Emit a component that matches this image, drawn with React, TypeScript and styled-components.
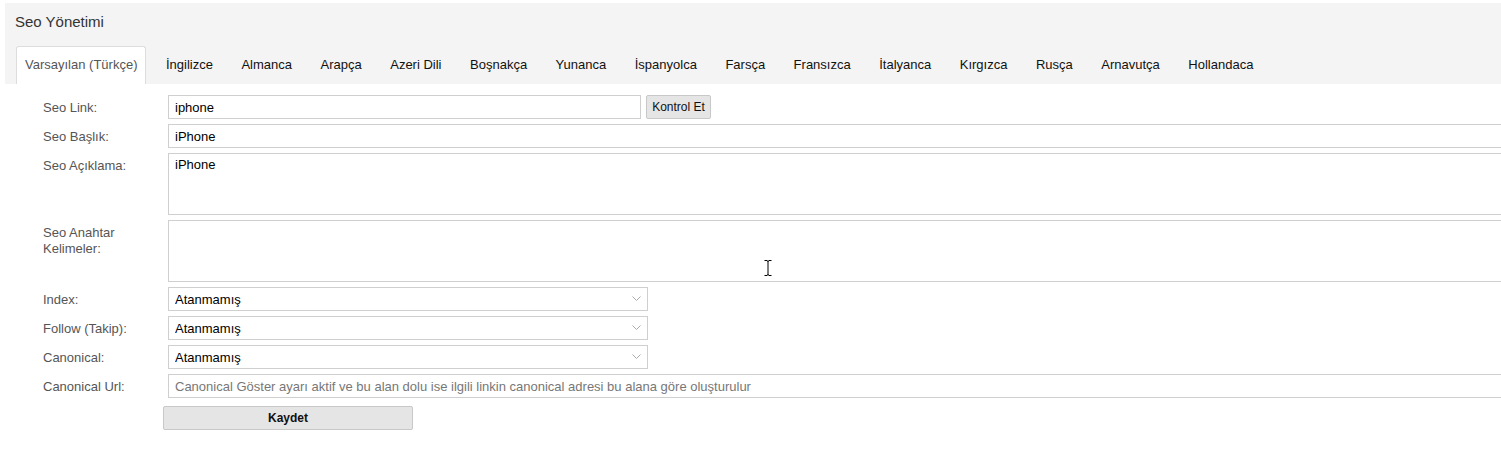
import { FC } from 'react';
import styled, { createGlobalStyle } from 'styled-components';

const GlobalStyle = createGlobalStyle`
    html, body {
        margin: 0;
        padding: 0;
        overflow: hidden;
        background: #ffffff;
    }
    body {
        font-family: "Liberation Sans", Arial, sans-serif;
        font-size: 13px;
        color: #333;
    }
    * {
        box-sizing: border-box;
    }
`;

const Page = styled.div`
    position: relative;
    padding: 3px 0 0 5px;
    width: 1501px;
    height: 470px;
`;

const Header = styled.div`
    background-color: #f4f4f4;
    padding: 9px 0 0 10px;
`;

const Title = styled.h1`
    margin: 0;
    font-size: 15px;
    font-weight: normal;
    line-height: 20px;
    color: #333;
`;

const Tabs = styled.ul`
    list-style: none;
    margin: 14px 0 0 1px;
    padding: 0;
    display: flex;
    gap: 10.5px;
`;

const Tab = styled.li<{ $active?: boolean }>`
    height: 38px;
    line-height: 36px;
    padding: 0 8px;
    font-size: 13px;
    white-space: nowrap;
    color: ${(p) => (p.$active ? '#555' : '#111')};
    background: ${(p) => (p.$active ? '#ffffff' : 'transparent')};
    border: 1px solid ${(p) => (p.$active ? '#dddddd' : 'transparent')};
    border-bottom: none;
    border-radius: 3px 3px 0 0;
`;

const Form = styled.form`
    display: flex;
    flex-direction: column;
    gap: 5px;
    padding-top: 11px;
`;

const Row = styled.div`
    display: grid;
    grid-template-columns: 163px 1fr;
    align-items: start;
`;

const Label = styled.label`
    padding: 5px 15px 0 38px;
    line-height: 16px;
    font-size: 13px;
    color: #555;
`;

const Field = styled.div`
    display: flex;
    align-items: center;
    gap: 5px;
`;

const TextInput = styled.input<{ $width?: number }>`
    width: ${(p) => (p.$width ? `${p.$width}px` : '1400px')};
    height: 24px;
    padding: 0 6px;
    border: 1px solid #cfcfcf;
    font-family: "Liberation Sans", Arial, sans-serif;
    font-size: 13px;
    color: #000;
    outline: none;

    &::placeholder {
        color: #777;
    }
`;

const TextArea = styled.textarea`
    width: 1400px;
    height: 62px;
    padding: 3px 6px;
    border: 1px solid #cfcfcf;
    font-family: "Liberation Sans", Arial, sans-serif;
    font-size: 13px;
    line-height: 16px;
    color: #000;
    resize: none;
    outline: none;
`;

const SelectWrap = styled.div`
    position: relative;
    width: 480px;
    height: 24px;

    svg {
        position: absolute;
        right: 7px;
        top: 9px;
        pointer-events: none;
    }
`;

const Select = styled.select`
    appearance: none;
    width: 100%;
    height: 24px;
    padding: 0 6px;
    border: 1px solid #cfcfcf;
    border-radius: 0;
    background: #fff;
    font-family: "Liberation Sans", Arial, sans-serif;
    font-size: 13px;
    color: #000;
    outline: none;
`;

const Button = styled.button<{ $wide?: boolean }>`
    height: 24px;
    width: ${(p) => (p.$wide ? '250px' : '65px')};
    margin-left: ${(p) => (p.$wide ? '-5px' : '0')};
    padding: 0;
    background: #e5e5e5;
    border: 1px solid #c8c8c8;
    border-radius: 2px;
    font-family: "Liberation Sans", Arial, sans-serif;
    font-size: 12px;
    font-weight: ${(p) => (p.$wide ? 'bold' : 'normal')};
    color: #111;
`;

const SaveRow = styled(Row)`
    margin-top: 3px;
`;

const Cursor = styled.svg`
    position: absolute;
    left: 764px;
    top: 260px;
`;

const tabs = [
    'Varsayılan (Türkçe)',
    'İngilizce',
    'Almanca',
    'Arapça',
    'Azeri Dili',
    'Boşnakça',
    'Yunanca',
    'İspanyolca',
    'Farsça',
    'Fransızca',
    'İtalyanca',
    'Kırgızca',
    'Rusça',
    'Arnavutça',
    'Hollandaca',
];

const Chevron = () => (
    <svg width="9" height="6" viewBox="0 0 9 6">
        <path d="M0.5 0.5 L4.5 4.5 L8.5 0.5" fill="none" stroke="#aaa" strokeWidth="1" />
    </svg>
);

const SelectField: FC<{ label: string }> = ({ label }) => (
    <Row>
        <Label>{label}</Label>
        <SelectWrap>
            <Select defaultValue="0">
                <option value="0">Atanmamış</option>
            </Select>
            <Chevron />
        </SelectWrap>
    </Row>
);

const App: FC = () => {
    return (
        <>
            <GlobalStyle />
            <Page>
                <Header>
                    <Title>Seo Yönetimi</Title>
                    <Tabs>
                        {tabs.map((t, i) => (
                            <Tab key={t} $active={i === 0}>
                                {t}
                            </Tab>
                        ))}
                    </Tabs>
                </Header>
                <Form onSubmit={(e) => e.preventDefault()}>
                    <Row>
                        <Label>Seo Link:</Label>
                        <Field>
                            <TextInput $width={473} defaultValue="iphone" />
                            <Button type="button">Kontrol Et</Button>
                        </Field>
                    </Row>
                    <Row>
                        <Label>Seo Başlık:</Label>
                        <TextInput defaultValue="iPhone" />
                    </Row>
                    <Row>
                        <Label>Seo Açıklama:</Label>
                        <TextArea defaultValue="iPhone" />
                    </Row>
                    <Row>
                        <Label>Seo Anahtar Kelimeler:</Label>
                        <TextArea />
                    </Row>
                    <SelectField label="Index:" />
                    <SelectField label="Follow (Takip):" />
                    <SelectField label="Canonical:" />
                    <Row>
                        <Label>Canonical Url:</Label>
                        <TextInput placeholder="Canonical Göster ayarı aktif ve bu alan dolu ise ilgili linkin canonical adresi bu alana göre oluşturulur" />
                    </Row>
                    <SaveRow>
                        <span />
                        <Field>
                            <Button type="submit" $wide>
                                Kaydet
                            </Button>
                        </Field>
                    </SaveRow>
                </Form>
                <Cursor width="8" height="16" viewBox="0 0 8 16">
                    <path d="M0.5 0.5 H3 M5 0.5 H7.5 M4 1 V15 M0.5 15.5 H3 M5 15.5 H7.5 M3 1 H5 M3 15 H5" stroke="#000" strokeWidth="1" fill="none" />
                </Cursor>
            </Page>
        </>
    );
};

export default App;
